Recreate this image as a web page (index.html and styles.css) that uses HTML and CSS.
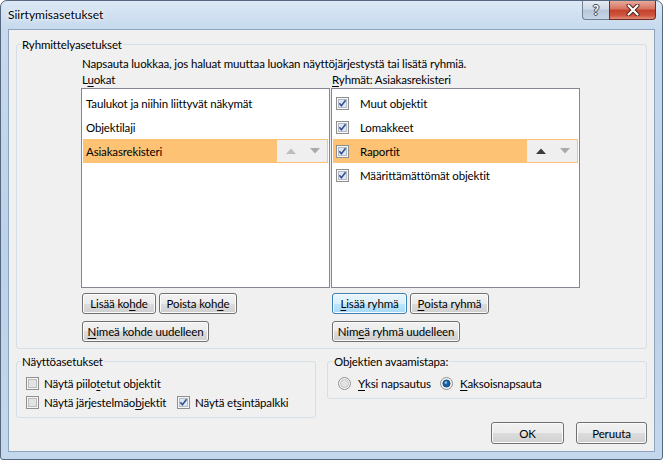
FILE: index.html
```html
<!DOCTYPE html>
<html lang="fi">
<head>
<meta charset="utf-8">
<title>Siirtymisasetukset</title>
<link rel="stylesheet" href="styles.css">
</head>
<body>
<div class="window">
  <div class="titlebar">
    <span class="title">Siirtymisasetukset</span>
    <div class="caption-buttons">
      <div class="cap-btn help">?</div>
      <div class="cap-btn close">
        <svg width="14" height="12" viewBox="0 0 14 12"><path d="M2.5 1.5 L11.5 10.5 M11.5 1.5 L2.5 10.5" stroke="#4a1f17" stroke-width="4" stroke-linecap="round"/><path d="M2.5 1.5 L11.5 10.5 M11.5 1.5 L2.5 10.5" stroke="#ffffff" stroke-width="2.2" stroke-linecap="round"/></svg>
      </div>
    </div>
  </div>
  <div class="client">
    <fieldset class="group group-main">
      <legend>Ryhmittelyasetukset</legend>
      <div class="main-inner">
        <p class="hint">Napsauta luokkaa, jos haluat muuttaa luokan näyttöjärjestystä tai lisätä ryhmiä.</p>
        <div class="columns">
          <div class="col">
            <div class="col-label">L<u>u</u>okat</div>
            <div class="listbox">
              <div class="row"><span class="row-text">Taulukot ja niihin liittyvät näkymät</span></div>
              <div class="row"><span class="row-text">Objektilaji</span></div>
              <div class="row sel"><span class="row-text">Asiakasrekisteri</span>
                <span class="arrows">
                  <svg class="arr" width="10" height="6" viewBox="0 0 10 6"><polygon points="0,6 5,0.5 10,6" fill="#bdbdbd"/></svg>
                  <svg class="arr" width="10" height="6" viewBox="0 0 10 6"><polygon points="0,0 5,5.5 10,0" fill="#a9a9a9"/></svg>
                </span>
              </div>
            </div>
            <div class="btn-row">
              <button class="btn w-add-item">Lisää ko<u>h</u>de</button>
              <button class="btn w-del-item">Poista koh<u>d</u>e</button>
            </div>
            <div class="btn-row">
              <button class="btn w-ren-item"><u>N</u>imeä kohde uudelleen</button>
            </div>
          </div>
          <div class="col">
            <div class="col-label"><u>R</u>yhmät: Asiakasrekisteri</div>
            <div class="listbox">
              <div class="row">
                <svg class="chk" width="13" height="13" viewBox="0 0 13 13"><rect x="0.5" y="0.5" width="12" height="12" fill="#f6f6f6" stroke="#8f8f8f"/><rect x="2.5" y="2.5" width="8" height="8" fill="#dfe6ef" stroke="#b4bcc7"/><path d="M3.4 6.2 L5.4 8.8 L9.6 3.2" stroke="#2c4f95" stroke-width="1.5" fill="none"/></svg>
                <span class="row-text">Muut objektit</span>
              </div>
              <div class="row">
                <svg class="chk" width="13" height="13" viewBox="0 0 13 13"><rect x="0.5" y="0.5" width="12" height="12" fill="#f6f6f6" stroke="#8f8f8f"/><rect x="2.5" y="2.5" width="8" height="8" fill="#dfe6ef" stroke="#b4bcc7"/><path d="M3.4 6.2 L5.4 8.8 L9.6 3.2" stroke="#2c4f95" stroke-width="1.5" fill="none"/></svg>
                <span class="row-text">Lomakkeet</span>
              </div>
              <div class="row sel">
                <svg class="chk" width="13" height="13" viewBox="0 0 13 13"><rect x="0.5" y="0.5" width="12" height="12" fill="#f6f6f6" stroke="#8f8f8f"/><rect x="2.5" y="2.5" width="8" height="8" fill="#dfe6ef" stroke="#b4bcc7"/><path d="M3.4 6.2 L5.4 8.8 L9.6 3.2" stroke="#2c4f95" stroke-width="1.5" fill="none"/></svg>
                <span class="row-text">Raportit</span>
                <span class="arrows">
                  <svg class="arr" width="10" height="6" viewBox="0 0 10 6"><polygon points="0,6 5,0.5 10,6" fill="#3c3c3c"/></svg>
                  <svg class="arr" width="10" height="6" viewBox="0 0 10 6"><polygon points="0,0 5,5.5 10,0" fill="#a9a9a9"/></svg>
                </span>
              </div>
              <div class="row">
                <svg class="chk" width="13" height="13" viewBox="0 0 13 13"><rect x="0.5" y="0.5" width="12" height="12" fill="#f6f6f6" stroke="#8f8f8f"/><rect x="2.5" y="2.5" width="8" height="8" fill="#dfe6ef" stroke="#b4bcc7"/><path d="M3.4 6.2 L5.4 8.8 L9.6 3.2" stroke="#2c4f95" stroke-width="1.5" fill="none"/></svg>
                <span class="row-text">Määrittämättömät objektit</span>
              </div>
            </div>
            <div class="btn-row">
              <button class="btn hot w-add-group"><u>L</u>isää ryhmä</button>
              <button class="btn w-del-group"><u>P</u>oista ryhmä</button>
            </div>
            <div class="btn-row">
              <button class="btn w-ren-group">Nim<u>e</u>ä ryhmä uudelleen</button>
            </div>
          </div>
        </div>
      </div>
    </fieldset>

    <div class="lower">
      <fieldset class="group group-display">
        <legend>Näyttöasetukset</legend>
        <div class="display-grid">
          <div class="opt">
            <svg class="chk" width="13" height="13" viewBox="0 0 13 13"><rect x="0.5" y="0.5" width="12" height="12" fill="#f6f6f6" stroke="#8f8f8f"/><rect x="2.5" y="2.5" width="8" height="8" fill="#e3e3e3" stroke="#bcbcbc"/></svg>
            <span>Näytä piilo<u>t</u>etut objektit</span>
          </div>
          <div></div>
          <div class="opt">
            <svg class="chk" width="13" height="13" viewBox="0 0 13 13"><rect x="0.5" y="0.5" width="12" height="12" fill="#f6f6f6" stroke="#8f8f8f"/><rect x="2.5" y="2.5" width="8" height="8" fill="#e3e3e3" stroke="#bcbcbc"/></svg>
            <span>Näytä järjestelmäo<u>b</u>jektit</span>
          </div>
          <div class="opt">
            <svg class="chk" width="13" height="13" viewBox="0 0 13 13"><rect x="0.5" y="0.5" width="12" height="12" fill="#f6f6f6" stroke="#8f8f8f"/><rect x="2.5" y="2.5" width="8" height="8" fill="#dfe6ef" stroke="#b4bcc7"/><path d="M3.4 6.2 L5.4 8.8 L9.6 3.2" stroke="#2c4f95" stroke-width="1.5" fill="none"/></svg>
            <span>Näytä et<u>s</u>intäpalkki</span>
          </div>
        </div>
      </fieldset>

      <div class="lower-right">
        <fieldset class="group group-open">
          <legend>Objektien avaamistapa:</legend>
          <div class="radio-row">
            <div class="opt">
              <svg class="rad" width="13" height="13" viewBox="0 0 13 13"><circle cx="6.5" cy="6.5" r="6" fill="#f4f4f4" stroke="#8f8f8f"/><circle cx="6.5" cy="6.5" r="4" fill="#e2e2e2" stroke="#c4c4c4"/></svg>
              <span><u>Y</u>ksi napsautus</span>
            </div>
            <div class="opt">
              <svg class="rad" width="13" height="13" viewBox="0 0 13 13"><circle cx="6.5" cy="6.5" r="6" fill="#f4f4f4" stroke="#8f8f8f"/><circle cx="6.5" cy="6.5" r="3.6" fill="#1d5f9e" stroke="#0e3d6c" stroke-width="0.8"/><circle cx="5.8" cy="5.6" r="1.3" fill="#7fc0f0"/></svg>
              <span><u>K</u>aksoisnapsauta</span>
            </div>
          </div>
        </fieldset>
        <div class="dialog-buttons">
          <button class="btn w-ok">OK</button>
          <button class="btn w-cancel">Peruuta</button>
        </div>
      </div>
    </div>
  </div>
</div>
</body>
</html>
```
FILE: styles.css
```css
* { box-sizing: border-box; }
html, body { margin: 0; padding: 0; }
body {
  width: 663px;
  height: 460px;
  overflow: hidden;
  background: #ffffff;
  font-family: Lato, "Open Sans", sans-serif;
  font-size: 11.5px;
  letter-spacing: -0.15px;
  color: #000;
}
u { text-underline-offset: 2px; }

.window {
  width: 663px;
  height: 460px;
  border: 1px solid #55677c;
  border-radius: 7px 7px 3px 3px;
  background: linear-gradient(to bottom, #dce8f5 0px, #c6d9ee 28px, #bcd2ea 55%, #c3d7ed 100%);
  padding: 0 7px 7px 7px;
  display: flex;
  flex-direction: column;
}

.titlebar {
  height: 28px;
  display: flex;
  align-items: flex-start;
  justify-content: space-between;
}
.title {
  margin-top: 6px;
  line-height: 16px;
  font-size: 12px;
  letter-spacing: 0;
  text-shadow: 0 0 6px #ffffff, 0 0 3px #ffffff;
}
.caption-buttons {
  display: flex;
  margin-right: -1px;
}
.cap-btn {
  height: 19px;
  display: flex;
  align-items: center;
  justify-content: center;
}
.help {
  width: 27px;
  border: 1px solid #6f8196;
  border-right: none;
  border-top: none;
  border-radius: 0 0 0 4px;
  background: linear-gradient(to bottom, #e4ebf3 0%, #cfdae7 45%, #b6c6d9 50%, #c7d6e6 100%);
  color: #ffffff;
  font-weight: bold;
  font-size: 13px;
  letter-spacing: 0;
  text-shadow: 0 0 1px #2b3b4d, 1px 0 0 #3e4f63, -1px 0 0 #3e4f63, 0 1px 0 #3e4f63, 0 -1px 0 #3e4f63;
}
.close {
  width: 47px;
  border: 1px solid #6e2e24;
  border-top: none;
  border-radius: 0 0 4px 0;
  background: linear-gradient(to bottom, #e8a89b 0%, #d7735f 45%, #c3402a 50%, #cf5640 80%, #e28d77 100%);
}

.client {
  flex: 1;
  background: #f0f0f0;
  border: 1px solid #8fa5bd;
  padding: 7px;
  display: flex;
  flex-direction: column;
}

.group {
  margin: 0;
  padding: 0;
  border: 1px solid #d5dfe5;
  border-radius: 3px;
  min-width: 0;
}
.group > legend {
  margin-left: 4px;
  padding: 0 1px;
  line-height: 15px;
  height: 15px;
}

.main-inner {
  padding: 4px 0 6px 64px;
}
.hint {
  margin: 0 0 0 1px;
  line-height: 16px;
}
.columns {
  display: flex;
}
.col {
  width: 250px;
}
.col-label {
  line-height: 16px;
  padding-left: 1px;
}
.listbox {
  width: 249px;
  height: 200px;
  border: 1px solid #828790;
  background: #ffffff;
  padding: 2px 1px;
}
.row {
  height: 24px;
  display: flex;
  align-items: center;
  padding-left: 3px;
}
.row.sel {
  background: #fdc274;
}
.chk {
  flex: none;
  margin-right: 11px;
}
.arrows {
  margin-left: auto;
  margin-right: 1px;
  width: 50px;
  height: 22px;
  background: #efefef;
  display: flex;
  align-items: center;
  padding-left: 9px;
  gap: 14px;
}
.arr { display: block; }

.btn-row {
  display: flex;
  gap: 3px;
  margin-left: 1px;
  margin-top: 5px;
}
.btn-row + .btn-row { margin-top: 7px; }

.btn {
  height: 21px;
  padding: 0;
  margin: 0;
  font: inherit;
  letter-spacing: inherit;
  color: #000;
  border: 1px solid #707070;
  border-radius: 3px;
  background: linear-gradient(to bottom, #f2f2f2 0%, #ebebeb 50%, #dddddd 50%, #cfcfcf 100%);
  box-shadow: inset 0 0 0 1px #fbfbfb;
  display: flex;
  align-items: center;
  justify-content: center;
}
.btn.hot {
  border-color: #3c7fb1;
  background: linear-gradient(to bottom, #eaf6fd 0%, #d9f0fc 50%, #bee6fd 50%, #a7d9f5 100%);
}
.w-add-item { width: 74px; }
.w-del-item { width: 78px; }
.w-ren-item { width: 127px; }
.w-add-group { width: 75px; }
.w-del-group { width: 79px; }
.w-ren-group { width: 128px; }

.lower {
  display: flex;
  gap: 11px;
  margin-top: 5px;
  align-items: flex-start;
}
.group-display {
  width: 300px;
}
.display-grid {
  display: grid;
  grid-template-columns: 151px auto;
  grid-auto-rows: 19px;
  padding: 5px 0 5px 9px;
}
.opt {
  display: flex;
  align-items: center;
}
.opt .chk { margin-right: 5px; }
.rad { flex: none; margin-right: 7px; }

.lower-right {
  flex: 1;
  display: flex;
  flex-direction: column;
}
.group-open > legend { margin-left: 5px; }
.radio-row {
  display: grid;
  grid-template-columns: 102px auto;
  height: 18px;
  padding-left: 10px;
  margin: 5px 0 6px;
  align-items: center;
}
.dialog-buttons {
  display: flex;
  justify-content: flex-end;
  gap: 12px;
  margin-top: 23px;
}
.w-ok { width: 73px; height: 22px; }
.w-cancel { width: 71px; height: 22px; }
```
